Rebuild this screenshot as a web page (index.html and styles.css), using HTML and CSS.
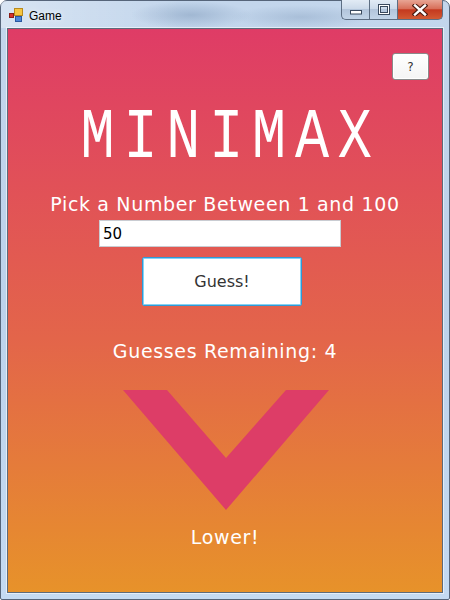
FILE: index.html
```html
<!DOCTYPE html>
<html>
<head>
<meta charset="utf-8">
<title>Game</title>
<link rel="stylesheet" href="styles.css">
</head>
<body>
<div class="window">
  <div class="titlebar">
    <svg class="app-icon" width="16" height="16" viewBox="0 0 16 16">
      <rect x="6.5" y="0.5" width="8" height="7" fill="#f5c542" stroke="#b98a1c"/>
      <rect x="1.5" y="5.5" width="4" height="4" fill="#d8322a" stroke="#8a1c16"/>
      <rect x="7.5" y="8.5" width="6" height="5" fill="#4c86d6" stroke="#2a58a0"/>
    </svg>
    <span class="title-text">Game</span>
    <div class="caption-buttons">
      <div class="cap-btn cap-min">
        <svg width="14" height="6" viewBox="0 0 14 6"><rect x="1.5" y="1.5" width="11" height="3.5" fill="#fff" stroke="#3a4a5e"/></svg>
      </div>
      <div class="cap-btn cap-max">
        <svg width="14" height="11" viewBox="0 0 14 11"><rect x="2.5" y="1.5" width="9" height="8" fill="none" stroke="#3a4a5e" stroke-width="3"/><rect x="2.5" y="1.5" width="9" height="8" fill="none" stroke="#fff" stroke-width="1"/></svg>
      </div>
      <div class="cap-btn cap-close">
        <svg width="16" height="12" viewBox="0 0 16 12"><path d="M3 1.5 L13 10.5 M13 1.5 L3 10.5" stroke="#4a1a10" stroke-width="4.6" stroke-linecap="square"/><path d="M3 1.5 L13 10.5 M13 1.5 L3 10.5" stroke="#fff" stroke-width="2.4" stroke-linecap="square"/></svg>
      </div>
    </div>
  </div>
  <div class="client">
    <div class="help-row"><button class="help-btn">?</button></div>
    <h1 class="logo"><span class="logo-text">MINIMAX</span></h1>
    <div class="label prompt">Pick a Number Between 1 and 100</div>
    <input class="guess-input" type="text" value="50">
    <button class="guess-btn">Guess!</button>
    <div class="label remaining">Guesses Remaining: 4</div>
    <svg class="chevron" width="206" height="120" viewBox="0 0 206 120">
      <polygon points="0,0 44,0 103,68 163,0 206,0 103,120" fill="#dd3d67"/>
    </svg>
    <div class="label result">Lower!</div>
  </div>
</div>
</body>
</html>
```

FILE: styles.css
```css
html, body {
  margin: 0;
  padding: 0;
  background: #ffffff;
}

.window {
  box-sizing: border-box;
  width: 450px;
  height: 600px;
  border: 1px solid #56657a;
  border-radius: 7px 7px 2px 2px;
  background: linear-gradient(to bottom, #c3d6ec 0%, #bcd2eb 50%, #c4daf2 100%);
  padding: 0 6px 6px 6px;
  display: flex;
  flex-direction: column;
  font-family: "DejaVu Sans", sans-serif;
}

.titlebar {
  height: 27px;
  display: flex;
  align-items: flex-start;
  margin: 0 -6px;
  background:
    radial-gradient(ellipse 60px 14px at 190px 14px, rgba(110,138,172,0.4), rgba(110,138,172,0)),
    radial-gradient(ellipse 70px 12px at 300px 16px, rgba(110,138,172,0.3), rgba(110,138,172,0)),
    linear-gradient(to right, rgba(255,255,255,0.35), rgba(255,255,255,0) 40%);
}

.app-icon {
  margin: 7px 0 0 7px;
  flex: none;
}

.title-text {
  font-family: "Liberation Sans", sans-serif;
  font-size: 12px;
  color: #000;
  margin: 8px 0 0 5px;
  line-height: 14px;
  text-shadow: 0 0 6px rgba(255,255,255,0.9);
}

.caption-buttons {
  margin-left: auto;
  margin-right: 6px;
  display: flex;
  height: 20px;
  margin-top: -1px;
}

.cap-btn {
  box-sizing: border-box;
  height: 20px;
  display: flex;
  align-items: center;
  justify-content: center;
  border: 1px solid #5d6e83;
  border-top: none;
}

.cap-min {
  width: 28px;
  border-right: none;
  border-radius: 0 0 0 5px;
  background: linear-gradient(to bottom, #e2ebf5 0%, #ccdaea 45%, #b3c5db 50%, #c2d4e8 100%);
}

.cap-max {
  width: 28px;
  border-right: none;
  background: linear-gradient(to bottom, #e2ebf5 0%, #ccdaea 45%, #b3c5db 50%, #c2d4e8 100%);
}

.cap-close {
  width: 46px;
  border-radius: 0 0 5px 0;
  background: linear-gradient(to bottom, #e8a594 0%, #d8705a 45%, #c4391f 52%, #d25a33 100%);
}

.cap-min svg { margin-top: 4px; }

.client {
  flex: 1;
  border: 1px solid #5d6b7c;
  box-shadow: 0 0 0 1px rgba(255,255,255,0.55);
  background: linear-gradient(to bottom, #df3c66 0%, #e3654a 55%, #e7922a 100%);
  display: flex;
  flex-direction: column;
  align-items: center;
}

.help-row {
  align-self: stretch;
  display: flex;
  justify-content: flex-end;
  padding: 24px 13px 0 0;
}

.help-btn {
  box-sizing: border-box;
  width: 37px;
  height: 27px;
  margin: 0;
  padding: 0;
  border: 1px solid #8a8a8a;
  border-radius: 3px;
  background: linear-gradient(to bottom, #ffffff, #f4f4f4);
  box-shadow: inset 0 0 0 1px #ffffff;
  font-family: "DejaVu Sans", sans-serif;
  font-size: 12px;
  color: #333;
}

.logo {
  margin: 23px 0 0 0;
  font-family: "Liberation Mono", monospace;
  font-weight: normal;
  font-size: 71px;
  line-height: 70px;
  color: #ffffff;
  white-space: nowrap;
}

.logo-text {
  display: inline-block;
  letter-spacing: 11px;
  margin-right: -11px;
  transform: scaleX(0.8);
}

.label {
  color: #ffffff;
  font-size: 19px;
  line-height: 22px;
  letter-spacing: 0.65px;
  white-space: nowrap;
}

.prompt {
  margin-top: 20px;
}

.guess-input {
  box-sizing: border-box;
  width: 242px;
  height: 27px;
  margin: 5px 10px 0 0;
  padding: 0 0 0 3px;
  border: 1px solid #c9ccd2;
  background: #fff;
  font-family: "DejaVu Sans", sans-serif;
  font-size: 15px;
  color: #000;
  outline: none;
}

.guess-btn {
  box-sizing: border-box;
  width: 160px;
  height: 49px;
  margin: 10px 6px 0 0;
  padding: 0;
  border: 1px solid #2f9ad8;
  border-radius: 2px;
  box-shadow: inset 0 0 0 1px #86d3f4;
  background: #ffffff;
  font-family: "DejaVu Sans", sans-serif;
  font-size: 16px;
  color: #333;
}

.remaining {
  margin-top: 34px;
}

.chevron {
  display: block;
  margin: 28px 0 0 2px;
}

.result {
  margin-top: 16px;
}
```
